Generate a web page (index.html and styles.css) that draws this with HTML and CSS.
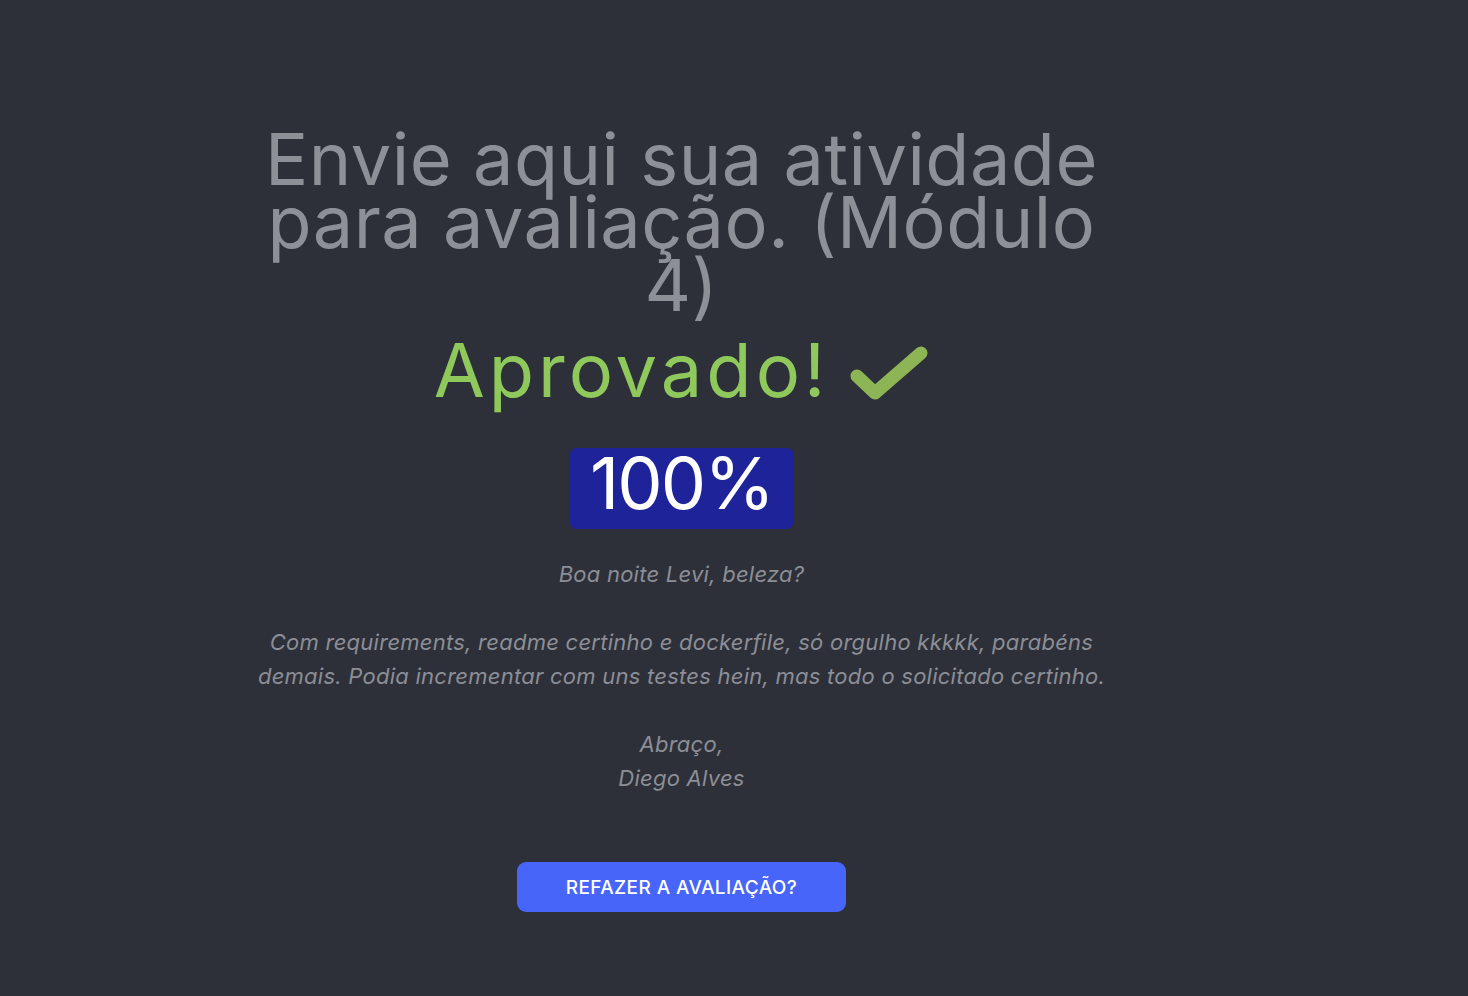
FILE: index.html
```html
<!DOCTYPE html>
<html lang="pt-BR">
<head>
<meta charset="utf-8">
<title>Avaliação</title>
<link rel="stylesheet" href="styles.css">
</head>
<body>
<main class="page">
  <section class="column">
    <h1 class="title">Envie aqui sua atividade para avaliação. (Módulo 4)</h1>
    <div class="status">
      <span class="status-text">Aprovado!</span>
      <svg class="check" width="80" height="58" viewBox="0 0 80 58" aria-hidden="true">
        <polyline points="8,32 26,49 72,9" fill="none" stroke="#8db555" stroke-width="13" stroke-linecap="round" stroke-linejoin="round"/>
      </svg>
    </div>
    <div class="score">100%</div>
    <p class="feedback">Boa noite Levi, beleza?<br><br>Com requirements, readme certinho e dockerfile, só orgulho kkkkk, parabéns demais. Podia incrementar com uns testes hein, mas todo o solicitado certinho.<br><br>Abraço,<br>Diego Alves</p>
    <button class="redo" type="button">REFAZER A AVALIAÇÃO?</button>
  </section>
</main>
</body>
</html>
```

FILE: styles.css
```css
html, body {
  margin: 0;
  padding: 0;
  background: #2d3039;
  min-height: 100%;
}

body {
  font-family: Inter, "Noto Sans", sans-serif;
  height: 996px;
  overflow: hidden;
}

.page {
  display: flex;
  justify-content: center;
  padding-right: 105px;
}

.column {
  width: 850px;
  display: flex;
  flex-direction: column;
  align-items: center;
  text-align: center;
}

.title {
  margin: 127px 0 0;
  font-size: 72px;
  font-weight: 400;
  line-height: 63px;
  color: #8e9098;
  letter-spacing: 0.5px;
}

.status {
  margin-top: 11px;
  display: flex;
  align-items: center;
  gap: 20px;
}

.status-text {
  font-size: 74px;
  line-height: 87px;
  color: #8fc95b;
  font-weight: 400;
  letter-spacing: 4px;
}

.check {
  display: block;
  margin-top: 4px;
}

.score {
  margin-top: 34px;
  background: #1e239a;
  color: #ffffff;
  font-size: 72px;
  line-height: 70px;
  padding: 0 21px 11px;
  border-radius: 8px;
  font-weight: 400;
  letter-spacing: -2px;
}

.feedback {
  margin: 28px 0 0;
  font-size: 22px;
  line-height: 34px;
  font-style: italic;
  color: #8c8e96;
  letter-spacing: 0.25px;
}

.redo {
  margin-top: 67px;
  width: 329px;
  height: 50px;
  border: none;
  border-radius: 9px;
  background: #4766f9;
  color: #ffffff;
  font-family: Inter, "Noto Sans", sans-serif;
  font-size: 19px;
  font-weight: 500;
  letter-spacing: 0.4px;
  cursor: pointer;
}
```
